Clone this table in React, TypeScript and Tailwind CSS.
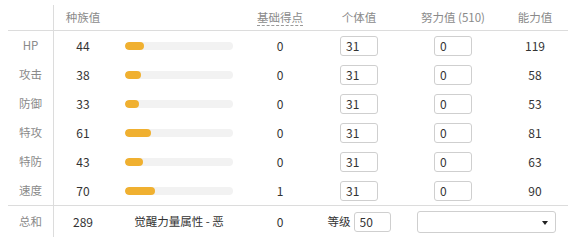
import React from "react";

type StatRow = {
  label: string;
  base: number;
  effort: number;
  iv: string;
  ev: string;
  total: number;
};

const rows: StatRow[] = [
  { label: "HP", base: 44, effort: 0, iv: "31", ev: "0", total: 119 },
  { label: "攻击", base: 38, effort: 0, iv: "31", ev: "0", total: 58 },
  { label: "防御", base: 33, effort: 0, iv: "31", ev: "0", total: 53 },
  { label: "特攻", base: 61, effort: 0, iv: "31", ev: "0", total: 81 },
  { label: "特防", base: 43, effort: 0, iv: "31", ev: "0", total: 63 },
  { label: "速度", base: 70, effort: 1, iv: "31", ev: "0", total: 90 },
];

const font = {
  fontFamily: '"Noto Sans CJK SC", "Noto Sans", sans-serif',
};

const BoxInput = ({ value, width = "w-[38px]" }: { value: string; width?: string }) => (
  <input
    type="text"
    defaultValue={value}
    className={`${width} h-[20px] border border-[#cfcfcf] rounded-[3px] px-[5px] text-[12px] text-[#333] outline-none bg-white`}
  />
);

const App = () => {
  return (
    <div className="w-[584px] h-[241px] bg-white pl-[8px] pt-[5px]" style={font}>
      <div className="w-[560px]">
        {/* header */}
        <div className="flex h-[26px] border-b border-[#dcdcdc] text-[11.5px] text-[#8a8a8a]">
          <div className="w-[46px] border-r border-[#dcdcdc]" />
          <div className="w-[58px] flex items-center justify-center">种族值</div>
          <div className="w-[134px]" />
          <div className="w-[68px] flex items-center justify-center">
            <span className="border-b border-dashed border-[#999] leading-[15px]">基础得点</span>
          </div>
          <div className="w-[90px] flex items-center justify-center">个体值</div>
          <div className="w-[98px] flex items-center justify-center">努力值 (510)</div>
          <div className="w-[66px] flex items-center justify-center">能力值</div>
        </div>

        {rows.map((row) => (
          <div key={row.label} className="flex h-[29px] text-[12px] text-[#333]">
            <div className="w-[46px] border-r border-[#dcdcdc] flex items-center justify-center text-[11.5px] text-[#8a8a8a]">
              {row.label}
            </div>
            <div className="w-[58px] flex items-center justify-center">{row.base}</div>
            <div className="w-[134px] flex items-center pl-[13px]">
              <div className="w-[108px] h-[8px] rounded-full bg-[#f2f2f2] overflow-hidden">
                <div
                  className="h-full rounded-full bg-[#f0b030]"
                  style={{ width: `${Math.round((row.base / 255) * 108)}px` }}
                />
              </div>
            </div>
            <div className="w-[68px] flex items-center justify-center">{row.effort}</div>
            <div className="w-[90px] flex items-center justify-center">
              <BoxInput value={row.iv} />
            </div>
            <div className="w-[98px] flex items-center justify-center">
              <BoxInput value={row.ev} />
            </div>
            <div className="w-[66px] flex items-center justify-center">{row.total}</div>
          </div>
        ))}

        {/* totals */}
        <div className="flex h-[32px] border-t border-[#dcdcdc] text-[12px] text-[#333]">
          <div className="w-[46px] border-r border-[#dcdcdc] flex items-center justify-center text-[11.5px] text-[#8a8a8a]">
            总和
          </div>
          <div className="w-[58px] flex items-center justify-center">289</div>
          <div className="w-[134px] flex items-center justify-center text-[11.5px]">觉醒力量属性 - 恶</div>
          <div className="w-[68px] flex items-center justify-center">0</div>
          <div className="w-[90px] flex items-center justify-center gap-[3px]">
            <span className="text-[11.5px]">等级</span>
            <BoxInput value="50" width="w-[37px]" />
          </div>
          <div className="w-[164px] flex items-center justify-center">
            <div className="relative w-[139px] h-[22px] border border-[#cfcfcf] rounded-[3px] bg-white">
              <span className="absolute right-[7px] top-[9px] w-0 h-0 border-l-[3px] border-r-[3px] border-t-[4px] border-l-transparent border-r-transparent border-t-[#222]" />
            </div>
          </div>
        </div>
      </div>
    </div>
  );
};

export default App;
